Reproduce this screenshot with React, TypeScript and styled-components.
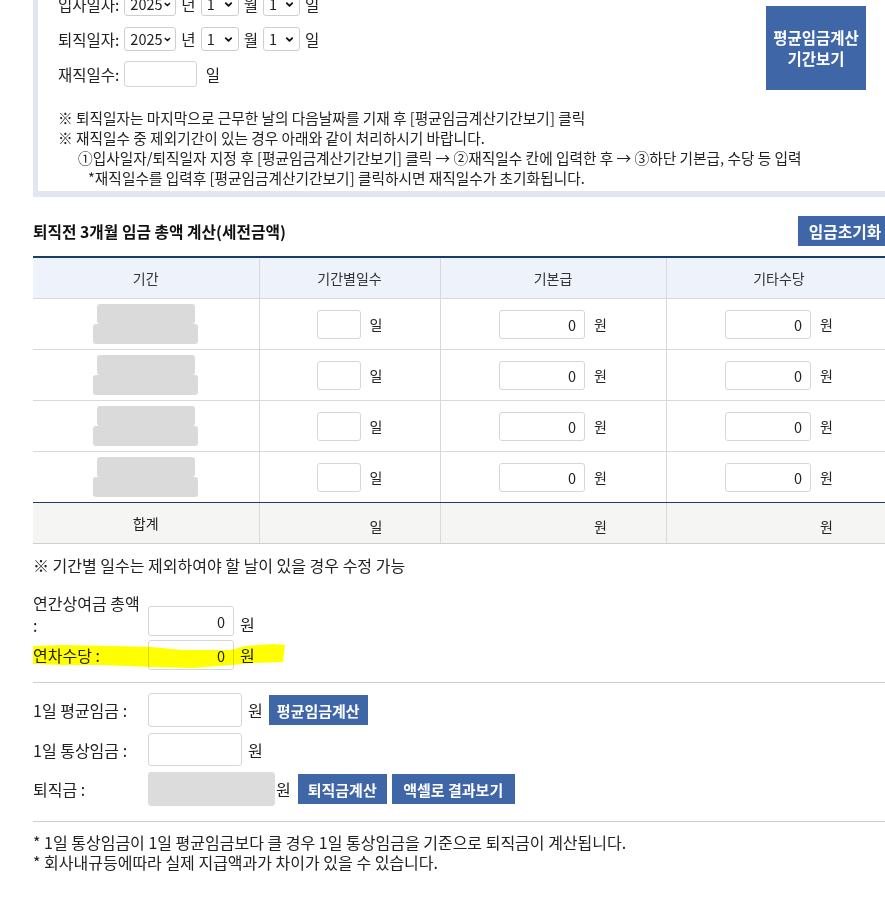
import React from "react";
import styled, { createGlobalStyle } from "styled-components";
import { ChevronDown } from "lucide-react";

const GlobalStyle = createGlobalStyle`
  html, body {
    margin: 0;
    padding: 0;
    background: #fff;
    overflow: hidden;
  }
  body {
    font-family: "Noto Sans CJK KR", "Noto Sans", sans-serif;
    font-size: 16px;
    color: #222;
  }
  input, button {
    font-family: "Noto Sans CJK KR", "Noto Sans", sans-serif;
  }
`;

const blue = "#3f66a6";
const navy = "#173e6b";
const line = "#d9d9d9";

const Page = styled.div`
  width: 859px;
  margin: -22px 0 0 33px;
`;

const InfoBox = styled.div`
  display: flex;
  justify-content: space-between;
  border-left: 5px solid #e1e6f0;
  border-bottom: 6px solid #e1e6f0;
  padding: 13px 26px 3px 20px;
`;

const InfoMain = styled.div`
  flex: 1;
  min-width: 0;
`;

const DateForm = styled.div`
  display: flex;
  flex-direction: column;
  gap: 9px;
  font-size: 15.5px;
`;

const DateRow = styled.div`
  display: flex;
  align-items: center;
  gap: 5px;
  height: 26px;
  line-height: 20px;
`;

const SelectBox = styled.div<{ $w: number }>`
  width: ${(p) => p.$w}px;
  height: 24px;
  box-sizing: border-box;
  display: flex;
  align-items: center;
  justify-content: space-between;
  padding: 0 4px 0 5px;
  border: 1px solid #cfcfcf;
  border-radius: 3px;
  background: #fff;
  font-size: 14.5px;
  color: #222;
`;

const DaysInput = styled.input`
  width: 73px;
  height: 26px;
  box-sizing: border-box;
  border: 1px solid #d4d4d4;
  border-radius: 3px;
`;

const Notes = styled.div`
  margin-top: 21px;
  line-height: 20px;
  font-size: 14.7px;
`;

const NoteLine = styled.div<{ $indent?: number }>`
  padding-left: ${(p) => p.$indent ?? 0}px;
  white-space: nowrap;
`;

const PeriodButton = styled.button`
  width: 100px;
  height: 84px;
  margin-top: 15px;
  border: 0;
  padding: 0;
  background: ${blue};
  color: #fff;
  font-weight: 700;
  font-size: 15.5px;
  line-height: 21px;
  flex: none;
`;

const SectionHead = styled.div`
  display: flex;
  justify-content: space-between;
  align-items: center;
  margin-top: 19px;
  height: 30px;
`;

const Title = styled.h3`
  margin: 0;
  font-size: 15.75px;
  font-weight: 700;
  color: #111;
`;

const BlueButton = styled.button<{ $w: number; $h?: number; $size?: number }>`
  width: ${(p) => p.$w}px;
  height: ${(p) => p.$h ?? 30}px;
  border: 0;
  padding: 0;
  background: ${blue};
  color: #fff;
  font-weight: 700;
  font-size: ${(p) => p.$size ?? 15}px;
  white-space: nowrap;
  flex: none;
`;

const WageTable = styled.table`
  width: 100%;
  margin-top: 10px;
  border-collapse: collapse;
  table-layout: fixed;
  border-top: 2px solid ${navy};
  font-size: 14px;
`;

const HeadCell = styled.th`
  height: 40px;
  padding: 0;
  background: #eef2fa;
  font-weight: 400;
  color: #333;
  border-bottom: 1px solid ${line};
  border-right: 1px solid ${line};
`;

const Cell = styled.td<{ $last?: boolean }>`
  height: 50px;
  padding: 0;
  text-align: center;
  border-bottom: 1px solid ${(p) => (p.$last ? navy : line)};
  border-right: 1px solid ${line};
`;

const SumCell = styled.td`
  height: 40px;
  padding: 0;
  text-align: center;
  background: #f5f5f4;
  border-bottom: 1px solid #cfcfcf;
  border-right: 1px solid ${line};
`;

const Inline = styled.div`
  display: inline-flex;
  align-items: center;
  gap: 9px;
`;

const Blur = styled.div`
  display: inline-flex;
  flex-direction: column;
  align-items: center;
`;

const BlurBar = styled.span<{ $w: number }>`
  display: block;
  width: ${(p) => p.$w}px;
  height: 20px;
  background: #dadada;
  border-radius: 3px;
`;

const TableInput = styled.input<{ $w: number }>`
  width: ${(p) => p.$w}px;
  height: 29px;
  box-sizing: border-box;
  border: 1px solid #d6d6d6;
  border-radius: 3px;
  text-align: right;
  padding: 0 8px;
  font-size: 14.5px;
  color: #222;
`;

const Spacer = styled.span<{ $w: number }>`
  display: inline-block;
  width: ${(p) => p.$w}px;
`;

const Hint = styled.p`
  margin: 11px 0 0;
  line-height: 20px;
`;

const FieldRow = styled.div<{ $align?: string }>`
  position: relative;
  display: flex;
  align-items: ${(p) => p.$align ?? "center"};
  gap: 6px;
`;

const FieldLabel = styled.div`
  width: 107px;
  margin-right: 2px;
  flex: none;
  line-height: 22px;
`;

const AmountInput = styled.input<{ $w: number; $h: number; $grey?: boolean }>`
  width: ${(p) => p.$w}px;
  height: ${(p) => p.$h}px;
  box-sizing: border-box;
  border: 1px solid ${(p) => (p.$grey ? "#dcdcdc" : "#d6d6d6")};
  border-radius: 3px;
  background: ${(p) => (p.$grey ? "#dcdcdc" : "#fff")};
  text-align: right;
  padding: 0 8px;
  font-size: 14.5px;
  color: #222;
`;

const Unit = styled.span<{ $tight?: boolean }>`
  margin-left: ${(p) => (p.$tight ? -5 : 0)}px;
  margin-right: ${(p) => (p.$tight ? 1 : 0)}px;
`;

const Bonus = styled.div`
  margin-top: 17px;
  display: flex;
  flex-direction: column;
  gap: 4px;
`;

const Highlight = styled.svg`
  position: absolute;
  left: 0;
  top: 0;
  width: 260px;
  height: 32px;
  mix-blend-mode: multiply;
  pointer-events: none;
`;

const Divider = styled.hr<{ $top?: number }>`
  margin: ${(p) => p.$top ?? 0}px 0 0;
  border: 0;
  border-top: 1px solid #cfcfcf;
`;

const Pay = styled.div`
  display: flex;
  flex-direction: column;
  gap: 6px;
  padding: 10px 0 15px;
`;

const Footer = styled.div`
  padding-top: 10px;
  line-height: 20px;
`;

const periods = [0, 1, 2, 3];

function DateSelect({ w, value }: { w: number; value: string }) {
  return (
    <SelectBox $w={w}>
      <span>{value}</span>
      <ChevronDown size={11} strokeWidth={4} color="#111" />
    </SelectBox>
  );
}

function DateLine({ label }: { label: string }) {
  return (
    <DateRow>
      <span>{label}</span>
      <DateSelect w={52} value="2025" />
      <span>년</span>
      <DateSelect w={38} value="1" />
      <span>월</span>
      <DateSelect w={37} value="1" />
      <span>일</span>
    </DateRow>
  );
}

export default function App() {
  return (
    <>
      <GlobalStyle />
      <Page>
        <InfoBox>
          <InfoMain>
            <DateForm>
              <DateLine label="입사일자:" />
              <DateLine label="퇴직일자:" />
              <DateRow>
                <span>재직일수:</span>
                <DaysInput />
                <span>&nbsp;일</span>
              </DateRow>
            </DateForm>
            <Notes>
              <NoteLine>※ 퇴직일자는 마지막으로 근무한 날의 다음날짜를 기재 후 [평균임금계산기간보기] 클릭</NoteLine>
              <NoteLine>※ 재직일수 중 제외기간이 있는 경우 아래와 같이 처리하시기 바랍니다.</NoteLine>
              <NoteLine $indent={20}>
                ①입사일자/퇴직일자 지정 후 [평균임금계산기간보기] 클릭 → ②재직일수 칸에 입력한 후 → ③하단 기본급, 수당 등 입력
              </NoteLine>
              <NoteLine $indent={30}>*재직일수를 입력후 [평균임금계산기간보기] 클릭하시면 재직일수가 초기화됩니다.</NoteLine>
            </Notes>
          </InfoMain>
          <PeriodButton>
            평균임금계산
            <br />
            기간보기
          </PeriodButton>
        </InfoBox>

        <SectionHead>
          <Title>퇴직전 3개월 임금 총액 계산(세전금액)</Title>
          <BlueButton $w={94} $size={15.75}>
            임금초기화
          </BlueButton>
        </SectionHead>

        <WageTable>
          <colgroup>
            <col style={{ width: 226 }} />
            <col style={{ width: 181 }} />
            <col style={{ width: 226 }} />
            <col style={{ width: 226 }} />
          </colgroup>
          <thead>
            <tr>
              <HeadCell>기간</HeadCell>
              <HeadCell>기간별일수</HeadCell>
              <HeadCell>기본급</HeadCell>
              <HeadCell>기타수당</HeadCell>
            </tr>
          </thead>
          <tbody>
            {periods.map((i) => {
              const last = i === periods.length - 1;
              return (
                <tr key={i}>
                  <Cell $last={last}>
                    <Blur>
                      <BlurBar $w={98} />
                      <BlurBar $w={105} />
                    </Blur>
                  </Cell>
                  <Cell $last={last}>
                    <Inline>
                      <TableInput $w={44} />
                      <span>일</span>
                    </Inline>
                  </Cell>
                  <Cell $last={last}>
                    <Inline>
                      <TableInput $w={86} defaultValue="0" />
                      <span>원</span>
                    </Inline>
                  </Cell>
                  <Cell $last={last}>
                    <Inline>
                      <TableInput $w={86} defaultValue="0" />
                      <span>원</span>
                    </Inline>
                  </Cell>
                </tr>
              );
            })}
            <tr>
              <SumCell>합계</SumCell>
              <SumCell>
                <Inline>
                  <Spacer $w={44} />
                  <span>일</span>
                </Inline>
              </SumCell>
              <SumCell>
                <Inline>
                  <Spacer $w={86} />
                  <span>원</span>
                </Inline>
              </SumCell>
              <SumCell>
                <Inline>
                  <Spacer $w={86} />
                  <span>원</span>
                </Inline>
              </SumCell>
            </tr>
          </tbody>
        </WageTable>

        <Hint>※ 기간별 일수는 제외하여야 할 날이 있을 경우 수정 가능</Hint>

        <Bonus>
          <FieldRow $align="flex-end">
            <FieldLabel>
              연간상여금 총액
              <br />:
            </FieldLabel>
            <AmountInput $w={86} $h={30} defaultValue="0" />
            <Unit>원</Unit>
          </FieldRow>
          <FieldRow>
            <FieldLabel>연차수당 :</FieldLabel>
            <AmountInput $w={86} $h={30} defaultValue="0" />
            <Unit>원</Unit>
            <Highlight viewBox="0 0 260 32">
              <path
                d="M0 6 L30 5 L80 6 L118 7 L150 10 L198 10 L212 6 L240 4 L252 5 L251 14 L250 22 L222 23 L198 25 L160 28 L118 27 L70 25 L30 25 L0 24 Z"
                fill="#ffff00"
              />
            </Highlight>
          </FieldRow>
        </Bonus>

        <Divider $top={12} />

        <Pay>
          <FieldRow>
            <FieldLabel>1일 평균임금 :</FieldLabel>
            <AmountInput $w={94} $h={34} />
            <Unit>원</Unit>
            <BlueButton $w={99}>평균임금계산</BlueButton>
          </FieldRow>
          <FieldRow>
            <FieldLabel>1일 통상임금 :</FieldLabel>
            <AmountInput $w={94} $h={33} />
            <Unit>원</Unit>
          </FieldRow>
          <FieldRow>
            <FieldLabel>퇴직금 :</FieldLabel>
            <AmountInput $w={127} $h={34} $grey readOnly />
            <Unit $tight>원</Unit>
            <BlueButton $w={89}>퇴직금계산</BlueButton>
            <BlueButton $w={123} style={{ marginLeft: -1 }}>
              액셀로 결과보기
            </BlueButton>
          </FieldRow>
        </Pay>

        <Divider />

        <Footer>
          <div>* 1일 통상임금이 1일 평균임금보다 클 경우 1일 통상임금을 기준으로 퇴직금이 계산됩니다.</div>
          <div>* 회사내규등에따라 실제 지급액과가 차이가 있을 수 있습니다.</div>
        </Footer>
      </Page>
    </>
  );
}
